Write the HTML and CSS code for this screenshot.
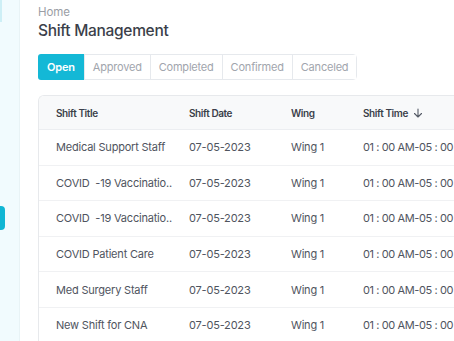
FILE: index.html
```html
<!DOCTYPE html>
<html lang="en">

<head>
    <meta charset="UTF-8">
    <meta name="viewport" content="width=device-width, initial-scale=1.0">
    <title>Shift Management</title>
    <link rel="stylesheet" href="styles.css">
</head>

<body>
    <div class="layout">
        <!-- 侧边栏 -->
        <aside class="sidebar">
            <div class="side-top"></div>
            <div class="side-active"></div>
        </aside>

        <main class="content">
            <div class="breadcrumb">Home</div>
            <h1 class="title">Shift Management</h1>

            <div class="tabs">
                <button class="tab active">Open</button>
                <button class="tab">Approved</button>
                <button class="tab">Completed</button>
                <button class="tab">Confirmed</button>
                <button class="tab">Canceled</button>
            </div>

            <div class="card">
                <table>
                    <thead>
                        <tr>
                            <th class="c1">Shift Title</th>
                            <th class="c2">Shift Date</th>
                            <th class="c3">Wing</th>
                            <th class="c4">Shift Time
                                <svg class="sort" width="10" height="10" viewBox="0 0 10 10"><path d="M5 1v8M1.5 5.5 5 9l3.5-3.5" fill="none" stroke="#555b66" stroke-width="1.1" stroke-linecap="round" stroke-linejoin="round"/></svg>
                            </th>
                        </tr>
                    </thead>
                    <tbody>
                        <tr>
                            <td>Medical Support Staff</td>
                            <td>07-05-2023</td>
                            <td>Wing 1</td>
                            <td class="time">01 : 00 AM-05 : 00 AM</td>
                        </tr>
                        <tr>
                            <td>COVID &nbsp;-19 Vaccinatio..</td>
                            <td>07-05-2023</td>
                            <td>Wing 1</td>
                            <td class="time">01 : 00 AM-05 : 00 AM</td>
                        </tr>
                        <tr>
                            <td>COVID &nbsp;-19 Vaccinatio..</td>
                            <td>07-05-2023</td>
                            <td>Wing 1</td>
                            <td class="time">01 : 00 AM-05 : 00 AM</td>
                        </tr>
                        <tr>
                            <td>COVID Patient Care</td>
                            <td>07-05-2023</td>
                            <td>Wing 1</td>
                            <td class="time">01 : 00 AM-05 : 00 AM</td>
                        </tr>
                        <tr>
                            <td>Med Surgery Staff</td>
                            <td>07-05-2023</td>
                            <td>Wing 1</td>
                            <td class="time">01 : 00 AM-05 : 00 AM</td>
                        </tr>
                        <tr>
                            <td>New Shift for CNA</td>
                            <td>07-05-2023</td>
                            <td>Wing 1</td>
                            <td class="time">01 : 00 AM-05 : 00 AM</td>
                        </tr>
                    </tbody>
                </table>
            </div>
        </main>
    </div>
</body>

</html>
```

FILE: styles.css
```css
/* 整体样式 */
body {
    font-family: Inter, "Noto Sans", sans-serif;
    background-color: #ffffff;
    margin: 0;
    overflow: hidden;
    width: 454px;
    height: 341px;
}

.layout {
    display: flex;
    height: 341px;
}

/* 侧边栏 */
.sidebar {
    width: 19px;
    flex-shrink: 0;
    background-color: #f1fbfe;
    border-right: 1px solid #e8f3f6;
    position: relative;
}

.side-top {
    width: 2px;
    height: 22px;
    background-color: #cdeff6;
}

.side-active {
    position: absolute;
    left: 0;
    top: 206px;
    width: 5px;
    height: 24px;
    background-color: #10b6d4;
    border-radius: 0 4px 4px 0;
}

/* 主内容 */
.content {
    padding: 5px 0 0 18px;
    min-width: 0;
    flex: 1;
}

.breadcrumb {
    font-size: 11.5px;
    color: #9a9ea5;
    line-height: 14px;
    letter-spacing: -0.1px;
}

.title {
    font-size: 15.5px;
    font-weight: 500;
    color: #3b3f4a;
    margin: 0;
    line-height: 24px;
    letter-spacing: -0.3px;
}

/* 标签页 */
.tabs {
    display: inline-flex;
    margin-top: 11px;
    border: 1px solid #e6e9ed;
    border-radius: 4px;
    height: 26px;
    box-sizing: border-box;
}

.tab {
    font-family: inherit;
    font-size: 11px;
    letter-spacing: -0.2px;
    color: #a1a5ad;
    background: #ffffff;
    border: none;
    border-left: 1px solid #e6e9ed;
    padding: 0 8px;
    height: 24px;
    cursor: pointer;
}

.tab:first-child {
    border-left: none;
}

.tab.active {
    background-color: #14b8d6;
    color: #ffffff;
    font-weight: 600;
    border-radius: 3px 0 0 3px;
    margin: -1px 0 -1px -1px;
    height: 26px;
    padding: 0 9px 0 9px;
}

/* 表格 */
.card {
    margin-top: 15px;
    width: 480px;
    border: 1px solid #e7e9ec;
    border-right: none;
    border-radius: 6px 0 0 0;
    overflow: hidden;
}

table {
    border-collapse: collapse;
    width: 100%;
    table-layout: fixed;
}

th,
td {
    text-align: left;
    padding: 0 0 0 17px;
    white-space: nowrap;
    overflow: hidden;
}

th {
    background-color: #f8f9fa;
    font-size: 10px;
    letter-spacing: -0.4px;
    font-weight: 600;
    color: #3b3f4a;
    height: 33px;
    border-bottom: 1px solid #eceef1;
}

td {
    font-size: 11px;
    letter-spacing: -0.2px;
    color: #4f545e;
    height: 34.6px;
    border-bottom: 1px solid #f0f1f3;
}

td.time {
    letter-spacing: -0.4px;
}

.c1 { width: 133px; box-sizing: border-box; }
.c2 { width: 102px; box-sizing: border-box; }
.c3 { width: 72px; box-sizing: border-box; }

.sort {
    vertical-align: -1px;
    margin-left: 3px;
}
```
